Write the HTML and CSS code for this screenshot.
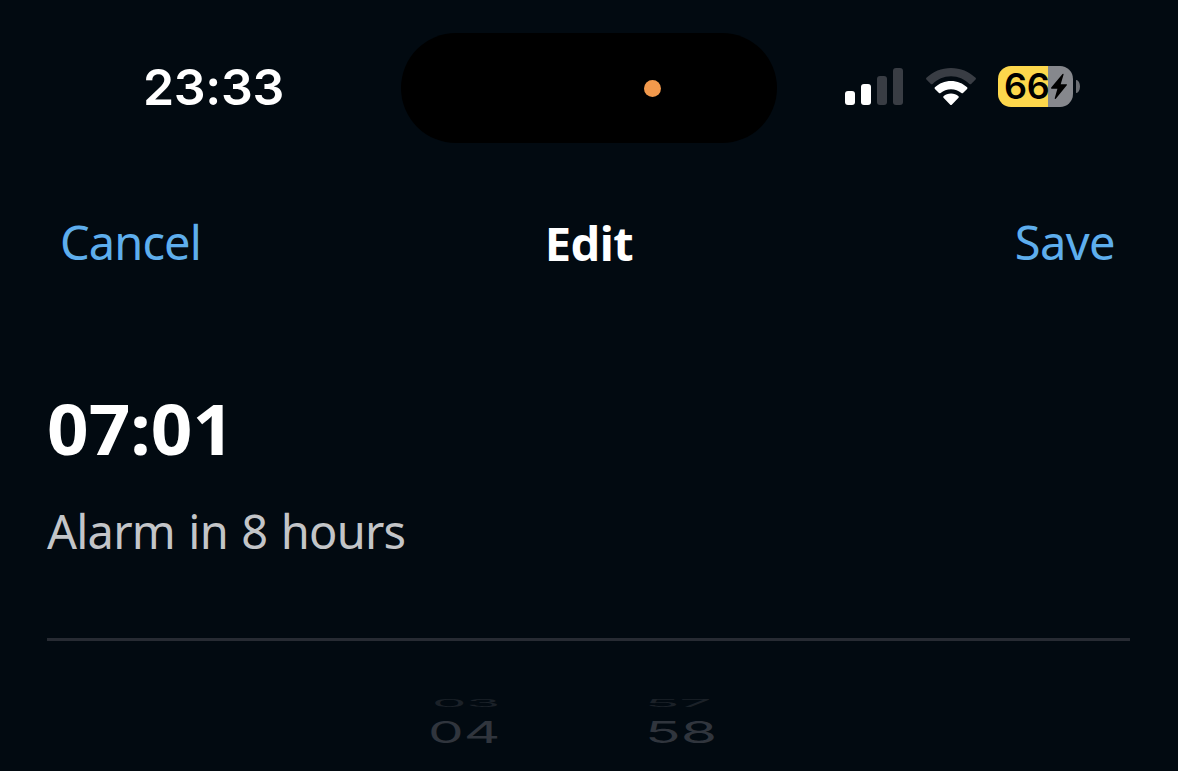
FILE: index.html
```html
<!DOCTYPE html>
<html lang="en">
<head>
  <meta charset="UTF-8" />
  <meta name="viewport" content="width=device-width, initial-scale=1.0" />
  <title>Edit alarm</title>
  <link rel="stylesheet" href="styles.css">
</head>
<body>
  <div class="status-bar">
    <div class="clock">23:33</div>
    <div class="island"><span class="mic-dot"></span></div>
    <div class="indicators">
      <svg class="signal" width="58" height="38" viewBox="0 0 58 38">
        <rect x="0" y="23" width="10" height="14" rx="3" fill="#fff" />
        <rect x="16" y="16" width="10" height="21" rx="3" fill="#fff" />
        <rect x="32" y="8" width="10" height="29" rx="3" fill="#393d44" />
        <rect x="48" y="0" width="10" height="37" rx="3" fill="#393d44" />
      </svg>
      <svg class="wifi" width="50" height="38" viewBox="0 0 50 38">
        <path d="M25 0C15.500 0 6.800 3.700.4 9.800Q-.3 10.600.4 11.400L4.900 15.900Q5.700 16.600 6.600 15.900C11.400 11.200 17.900 8.300 25 8.300S38.600 11.200 43.400 15.900Q44.300 16.600 45.100 15.900L49.600 11.400Q50.300 10.600 49.600 9.800C43.200 3.700 34.500 0 25 0Z" fill="#393d44" />
        <path d="M25 13C18.800 13 13.100 15.400 8.900 19.300Q8.100 20.100 8.900 20.900L13 25Q13.800 25.600 14.600 25C17.400 22.600 21 21.200 25 21.200S32.600 22.600 35.400 25Q36.200 25.600 37 25L41.100 20.900Q41.900 20.100 41.100 19.300C36.900 15.400 31.200 13 25 13Z" fill="#fff" />
        <path d="M25 25.500C22.100 25.500 19.500 26.500 17.500 28.200Q16.800 29 17.500 29.700L24 36.500Q25 37.500 26 36.500L32.500 29.700Q33.200 29 32.500 28.200C30.500 26.500 27.900 25.500 25 25.500Z" fill="#fff" />
      </svg>
      <div class="battery">
        <div class="battery-body">
          <span class="battery-level">66</span>
          <svg width="18" height="27" viewBox="0 0 18 27">
            <path d="M12.500 1 1.200 14.600Q.5 15.700 1.700 15.700H7.400L4.700 25.300Q4.800 26.500 5.800 25.700L16.800 12.300Q17.500 11.200 16.300 11.200H10.700L13.600 1.600Q13.600.2 12.500 1Z" fill="#000" />
          </svg>
        </div>
        <div class="battery-cap"></div>
      </div>
    </div>
  </div>

  <div class="nav">
    <a class="cancel">Cancel</a>
    <h1>Edit</h1>
    <a class="save">Save</a>
  </div>

  <div class="alarm">
    <div class="alarm-time">07:01</div>
    <div class="alarm-info">Alarm in 8 hours</div>
  </div>

  <div class="picker">
    <div class="wheel hours">
      <span class="far">03</span>
      <span class="near">04</span>
    </div>
    <div class="wheel minutes">
      <span class="far">57</span>
      <span class="near">58</span>
    </div>
  </div>
</body>
</html>
```
FILE: styles.css
```css
body {
  font-family: 'Noto Sans', sans-serif;
  background-color: #020a11;
  color: #fff;
  margin: 0;
  height: 771px;
  overflow: hidden;
}

.status-bar {
  display: grid;
  grid-template-columns: 401px 376px 1fr;
  height: 110px;
  padding-top: 33px;
  align-items: center;
}

.clock {
  font-family: Inter, sans-serif;
  font-size: 50px;
  font-weight: 600;
  line-height: 60px;
  letter-spacing: -0.3px;
  padding: 0 0 2px 143px;
}

.island {
  display: flex;
  align-items: center;
  height: 110px;
  border-radius: 55px;
  background-color: #000;
}

.mic-dot {
  width: 17px;
  height: 17px;
  margin-left: 243px;
  border-radius: 50%;
  background-color: #f2994c;
}

.indicators {
  display: flex;
  align-items: center;
  padding: 0 0 3px 68px;
}

.wifi {
  margin-left: 23px;
}

.battery {
  display: flex;
  align-items: center;
  margin-left: 22px;
}

.battery-body {
  display: flex;
  align-items: center;
  width: 75px;
  height: 41px;
  border-radius: 13px;
  background: linear-gradient(to right, #fdd74c 50px, #86888d 50px);
}

.battery-level {
  width: 46px;
  margin-left: 6px;
  font-family: Inter, sans-serif;
  font-size: 36px;
  font-weight: 600;
  line-height: 41px;
  letter-spacing: -0.3px;
  color: #000;
}

.battery-cap {
  width: 4px;
  height: 13px;
  margin-left: 3px;
  border-radius: 0 4px 4px 0 / 0 7px 7px 0;
  background-color: #6b6e73;
}

.nav {
  display: grid;
  grid-template-columns: 1fr auto 1fr;
  align-items: center;
  height: 64px;
  margin-top: 67px;
  padding: 0 63px 0 60px;
  font-size: 47px;
  line-height: 64px;
}

.nav a {
  color: #5eaeed;
}

.nav h1 {
  margin: 0;
  padding: 2px 0 0 3px;
  font-size: 47px;
  font-weight: 700;
  line-height: 62px;
  letter-spacing: -0.5px;
}

.cancel {
  letter-spacing: -0.9px;
}

.save {
  text-align: right;
  letter-spacing: -0.6px;
}

.alarm {
  height: 265px;
  margin: 0 48px 0 47px;
  padding-top: 99px;
  border-bottom: 3px solid #272b33;
}

.alarm-time {
  font-size: 70px;
  font-weight: 700;
  line-height: 110px;
  transform: scaleX(1.04);
  transform-origin: left;
}

.alarm-info {
  font-size: 47px;
  line-height: 64px;
  margin-top: 16px;
  letter-spacing: -0.8px;
  word-spacing: 2px;
  color: #c3c5c8;
}

.picker {
  display: flex;
  gap: 145px;
  padding: 58px 0 0 428px;
  font-family: Inter, sans-serif;
  font-size: 54px;
}

.wheel {
  display: flex;
  flex-direction: column;
  width: 72px;
}

.wheel span {
  display: block;
  transform-origin: left;
}

.far {
  height: 10px;
  line-height: 10px;
  color: #1b2128;
}

.near {
  height: 40px;
  line-height: 40px;
  margin-top: 4px;
  color: #30353d;
}

.hours .far {
  padding-left: 4px;
  transform: scale(1.01, 0.18);
}

.hours .near {
  transform: scale(1.05, 0.54);
}

.minutes .far {
  transform: scale(1.05, 0.18);
}

.minutes .near {
  transform: scale(1.09, 0.54);
}
```
